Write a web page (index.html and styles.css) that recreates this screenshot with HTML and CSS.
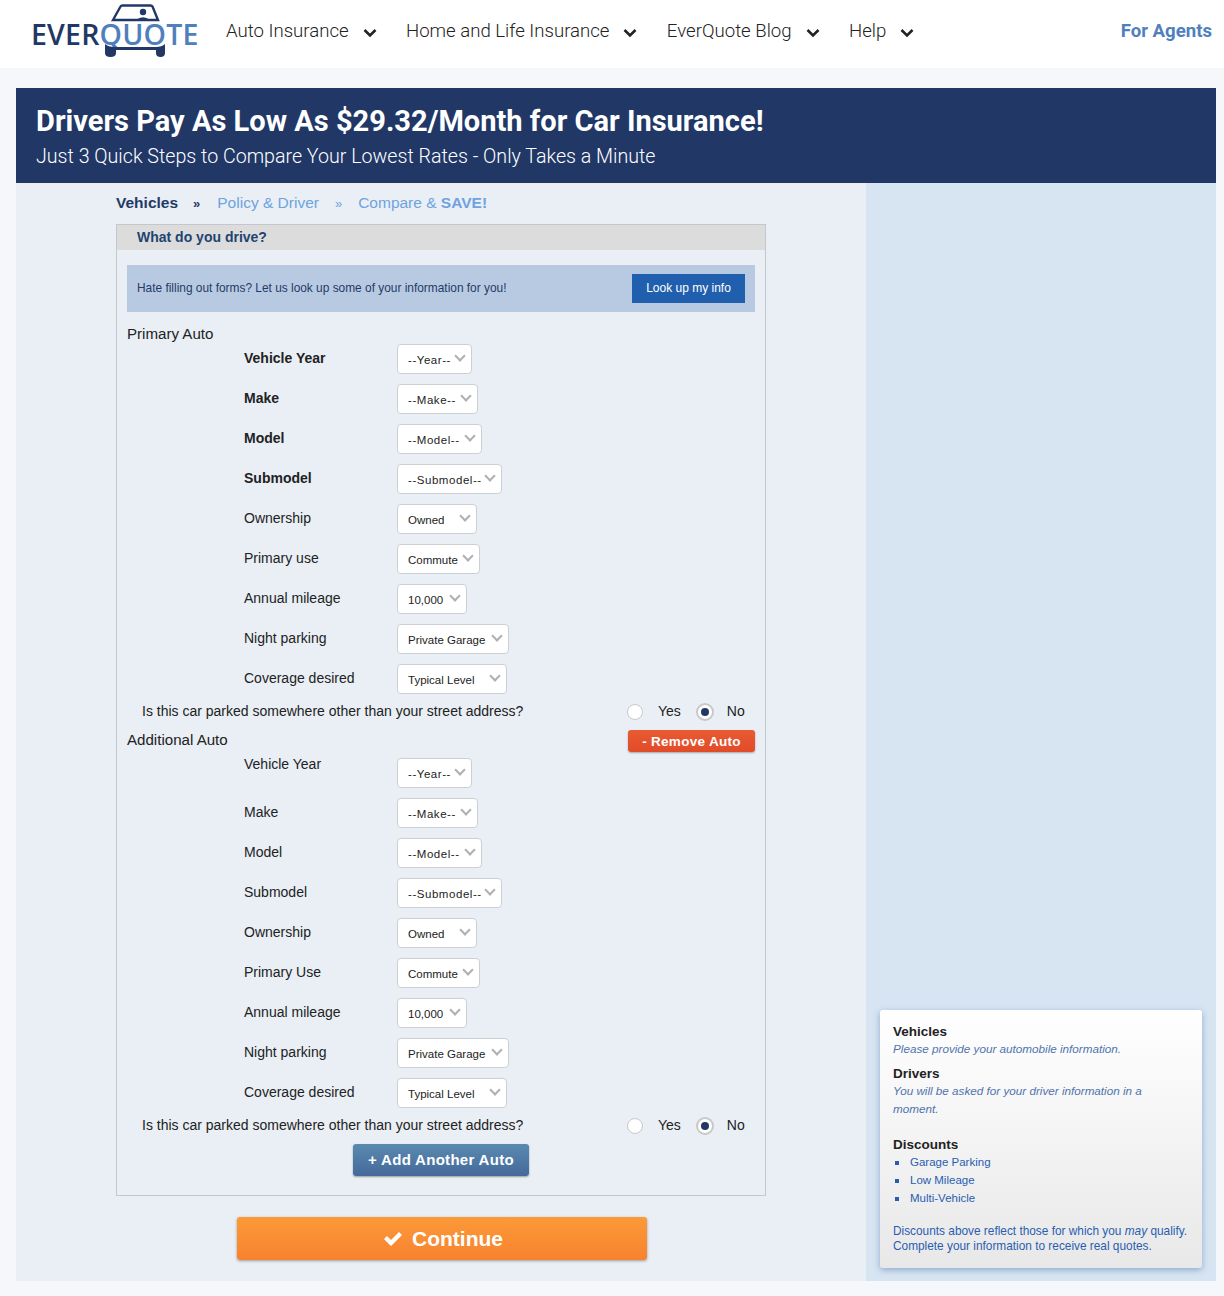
FILE: index.html

```html
<!DOCTYPE html>
<html lang="en">
<head>
  <meta charset="UTF-8">
  <meta name="viewport" content="width=device-width, initial-scale=1.0">
  <title>EverQuote - Vehicles</title>
  <link rel="stylesheet" href="styles.css">
</head>
<body>
<header class="topbar">
  <a class="logo">
    <svg class="logo-car" width="70" height="58" viewBox="0 0 70 58">
      <path d="M15 20 L22.500 6.500 Q23 5.500 24.500 5.500 H52.500 Q54 5.500 54.500 6.500 L60 20 Z" fill="none" stroke="#213867" stroke-width="2.400"/>
      <circle cx="45" cy="12" r="3.200" fill="#213867"/>
      <path d="M38 20 Q45 14.500 52 20 Z" fill="#213867"/>
      <path d="M7 44 Q10 47 17 47 H58 Q64 47 67 44 V53 Q67 57 62.500 57 Q58 57 58 53 V50 H18 V53 Q18 57 12.500 57 Q7 57 7 53 Z" fill="#213867"/>
    </svg>
    <span class="logo-dark">EVER</span><span class="logo-light">QUOTE</span>
  </a>
  <nav class="nav">
    <a class="nav-item">Auto Insurance <svg class="nav-chev" width="14" height="10" viewBox="0 0 14 10"><path d="M1.500 2 L7 7.500 L12.500 2" fill="none" stroke="#222" stroke-width="2.600"/></svg></a>
    <a class="nav-item">Home and Life Insurance <svg class="nav-chev" width="14" height="10" viewBox="0 0 14 10"><path d="M1.500 2 L7 7.500 L12.500 2" fill="none" stroke="#222" stroke-width="2.600"/></svg></a>
    <a class="nav-item">EverQuote Blog <svg class="nav-chev" width="14" height="10" viewBox="0 0 14 10"><path d="M1.500 2 L7 7.500 L12.500 2" fill="none" stroke="#222" stroke-width="2.600"/></svg></a>
    <a class="nav-item">Help <svg class="nav-chev" width="14" height="10" viewBox="0 0 14 10"><path d="M1.500 2 L7 7.500 L12.500 2" fill="none" stroke="#222" stroke-width="2.600"/></svg></a>
  </nav>
  <a class="agents">For Agents</a>
</header>

<div class="wrapper">
  <div class="banner">
    <h1>Drivers Pay As Low As $29.32/Month for Car Insurance!</h1>
    <p>Just 3 Quick Steps to Compare Your Lowest Rates - Only Takes a Minute</p>
  </div>

  <div class="content">
    <main class="main-col">
      <div class="steps">
        <span class="step-on">Vehicles</span>
        <span class="sep-on">»</span>
        <span>Policy &amp; Driver</span>
        <span class="sep">»</span>
        <span>Compare &amp; <b>SAVE!</b></span>
      </div>

      <section class="form-box">
        <h2 class="form-title">What do you drive?</h2>
        <div class="form-body">
          <div class="lookup">
            <span>Hate filling out forms? Let us look up some of your information for you!</span>
            <button class="lookup-btn">Look up my info</button>
          </div>

          <div class="group-title">Primary Auto</div>
          <div class="row"><label class="req">Vehicle Year</label><div class="sel empty w-year">--Year--</div></div>
          <div class="row"><label class="req">Make</label><div class="sel empty w-make">--Make--</div></div>
          <div class="row"><label class="req">Model</label><div class="sel empty w-model">--Model--</div></div>
          <div class="row"><label class="req">Submodel</label><div class="sel empty w-submodel">--Submodel--</div></div>
          <div class="row"><label>Ownership</label><div class="sel w-owned">Owned</div></div>
          <div class="row"><label>Primary use</label><div class="sel w-use">Commute</div></div>
          <div class="row"><label>Annual mileage</label><div class="sel w-miles">10,000</div></div>
          <div class="row"><label>Night parking</label><div class="sel w-night">Private Garage</div></div>
          <div class="row"><label>Coverage desired</label><div class="sel w-cover">Typical Level</div></div>
          <div class="parked">
            <span class="parked-q">Is this car parked somewhere other than your street address?</span>
            <span class="radio"></span><span class="radio-label">Yes</span>
            <span class="radio on"></span><span class="radio-label">No</span>
          </div>

          <div class="group-head">
            <div class="group-title">Additional Auto</div>
            <button class="remove-btn">- Remove Auto</button>
          </div>
          <div class="row row-first"><label>Vehicle Year</label><div class="sel empty w-year">--Year--</div></div>
          <div class="row"><label>Make</label><div class="sel empty w-make">--Make--</div></div>
          <div class="row"><label>Model</label><div class="sel empty w-model">--Model--</div></div>
          <div class="row"><label>Submodel</label><div class="sel empty w-submodel">--Submodel--</div></div>
          <div class="row"><label>Ownership</label><div class="sel w-owned">Owned</div></div>
          <div class="row"><label>Primary Use</label><div class="sel w-use">Commute</div></div>
          <div class="row"><label>Annual mileage</label><div class="sel w-miles">10,000</div></div>
          <div class="row"><label>Night parking</label><div class="sel w-night">Private Garage</div></div>
          <div class="row"><label>Coverage desired</label><div class="sel w-cover">Typical Level</div></div>
          <div class="parked">
            <span class="parked-q">Is this car parked somewhere other than your street address?</span>
            <span class="radio"></span><span class="radio-label">Yes</span>
            <span class="radio on"></span><span class="radio-label">No</span>
          </div>

          <div class="add-wrap"><button class="add-btn">+ Add Another Auto</button></div>
        </div>
      </section>

      <div class="continue-wrap">
        <button class="continue-btn">
          <svg width="18" height="15" viewBox="0 0 18 15"><path d="M0 8 L3 5 L7 9 L15 1 L18 4 L7 15 Z" fill="#fff"/></svg>
          Continue
        </button>
      </div>
    </main>

    <aside class="side-col">
      <div class="side-card">
        <h3>Vehicles</h3>
        <p class="side-note">Please provide your automobile information.</p>
        <h3 class="side-gap">Drivers</h3>
        <p class="side-note">You will be asked for your driver information in a moment.</p>
        <h3 class="side-gap-lg">Discounts</h3>
        <ul class="side-list">
          <li>Garage Parking</li>
          <li>Low Mileage</li>
          <li>Multi-Vehicle</li>
        </ul>
        <div class="side-foot">
          <p>Discounts above reflect those for which you <i>may</i> qualify.</p>
          <p>Complete your information to receive real quotes.</p>
        </div>
      </div>
    </aside>
  </div>
</div>
</body>
</html>
```

FILE: styles.css

```css
body {
  margin: 0;
  background-color: #f5f7fb;
  font-family: "Liberation Sans", Arial, sans-serif;
  color: #222;
  height: 1296px;
}

/* top bar */
.topbar {
  height: 68px;
  background-color: white;
  display: flex;
  align-items: center;
  position: relative;
}

.logo {
  position: relative;
  margin-left: 31px;
  width: 169px;
  height: 68px;
  display: flex;
  align-items: center;
  font-family: "Open Sans", sans-serif;
  font-weight: 600;
  font-size: 28.500px;
  letter-spacing: 0.2px;
  box-sizing: border-box;
}

.logo-car {
  position: absolute;
  left: 67px;
  top: 0;
}

.logo-dark {
  color: #213867;
}

.logo-light {
  color: #4f80bd;
}

.nav {
  display: flex;
  margin-left: 26px;
  padding-bottom: 6px;
  gap: 29.400px;
}

.nav-item {
  font-family: Roboto, sans-serif;
  font-weight: 300;
  font-size: 18.600px;
  color: #222;
  display: flex;
  align-items: center;
  gap: 14px;
}

.nav-chev {
  margin-top: 3px;
}

.agents {
  margin-left: auto;
  margin-right: 12px;
  padding-bottom: 6px;
  font-family: Roboto, sans-serif;
  font-weight: 700;
  font-size: 18.600px;
  color: #4f80bd;
}

/* page */
.wrapper {
  margin: 20px 8px 0 16px;
}

.banner {
  height: 95px;
  box-sizing: border-box;
  padding: 14px 20px 0;
  background-color: #213867;
  color: white;
  font-family: Roboto, sans-serif;
}

.banner h1 {
  margin: 0;
  font-size: 29.060px;
  font-weight: 700;
  line-height: 38px;
}

.banner p {
  margin: 2px 0 0;
  font-size: 19.640px;
  font-weight: 300;
  line-height: 29px;
}

.content {
  display: flex;
  height: 1098px;
}

.main-col {
  width: 850px;
  box-sizing: border-box;
  background-color: #e9eff5;
  padding: 0 100px;
}

.side-col {
  width: 350px;
  box-sizing: border-box;
  background-color: #d7e5f3;
  padding: 0 14px 13px;
  display: flex;
  flex-direction: column;
  justify-content: flex-end;
}

/* steps */
.steps {
  height: 40px;
  margin-bottom: 1px;
  display: flex;
  align-items: center;
  font-size: 15.500px;
  color: #6fa3e0;
}

.steps b {
  font-weight: 700;
}

.step-on {
  color: #1f3a66;
  font-weight: 700;
}

.sep-on {
  color: #1f3a66;
  font-weight: 700;
  font-size: 13px;
  margin: 0 17px 0 15px;
}

.sep {
  font-size: 13px;
  margin: 0 16px;
}

/* form */
.form-box {
  width: 650px;
  height: 972px;
  box-sizing: border-box;
  border: 1px solid #c4c8cc;
}

.form-title {
  margin: 0;
  height: 25px;
  line-height: 25px;
  padding-left: 20px;
  background-color: #dcdcdc;
  color: #1f4471;
  font-size: 14px;
  font-weight: 700;
}

.form-body {
  padding: 15px 10px 0;
}

.lookup {
  height: 47px;
  background-color: #b8cae2;
  display: flex;
  align-items: center;
  justify-content: space-between;
  padding: 0 10px;
  font-size: 11.900px;
  color: #1f3a66;
}

.lookup span {
  margin-top: -2px;
}

.lookup-btn {
  width: 113px;
  height: 29px;
  border: none;
  background-color: #1f5fae;
  color: white;
  font-family: inherit;
  font-size: 12px;
  padding: 0 0 2px;
}

.group-title {
  font-size: 15.100px;
  line-height: 20px;
}

.form-body > .group-title {
  margin: 12px 0 -5px;
}

.row {
  height: 40px;
  display: flex;
  align-items: center;
  padding-left: 117px;
  font-size: 14px;
}

.row label {
  width: 153px;
  margin-top: -3px;
}

.row label.req {
  font-weight: 700;
}

.row-first {
  margin-top: 1px;
}

.row-first label {
  align-self: flex-start;
  margin-top: 3px;
}

.sel {
  position: relative;
  height: 30px;
  line-height: 31px;
  box-sizing: border-box;
  background-color: white;
  border: 1px solid #ccd0d4;
  border-radius: 4px;
  padding-left: 10px;
  font-size: 11.500px;
  color: #222;
}

.sel.empty {
  letter-spacing: 0.55px;
}

.sel::after {
  content: "";
  position: absolute;
  right: 7px;
  top: 7px;
  width: 6px;
  height: 6px;
  border-right: 2px solid #b0b0b0;
  border-bottom: 2px solid #b0b0b0;
  transform: rotate(45deg);
}

.w-year { width: 75px; }
.w-make { width: 81px; }
.w-model { width: 85px; }
.w-submodel { width: 105px; }
.w-owned { width: 80px; }
.w-use { width: 83px; }
.w-miles { width: 70px; }
.w-night { width: 112px; }
.w-cover { width: 110px; }

.parked {
  height: 22px;
  margin-top: 1px;
  padding-left: 15px;
  display: flex;
  align-items: center;
  font-size: 14px;
}

.parked-q {
  width: 485px;
}

.radio {
  width: 16px;
  height: 16px;
  margin-top: 2px;
  box-sizing: border-box;
  border: 1.500px solid #c8c8c8;
  border-radius: 50%;
  background-color: white;
  position: relative;
}

.radio.on {
  width: 18px;
  height: 18px;
  border-width: 2px;
  margin-left: 15px;
}

.radio.on::after {
  content: "";
  position: absolute;
  left: 3px;
  top: 3px;
  width: 8px;
  height: 8px;
  border-radius: 50%;
  background-color: #213867;
}

.radio-label {
  margin-left: 15px;
}

.radio.on + .radio-label {
  margin-left: 13px;
}

.group-head {
  display: flex;
  justify-content: space-between;
  align-items: center;
  height: 22px;
  margin-top: 8px;
}

.group-head .group-title {
  margin-top: -2px;
}

.remove-btn {
  width: 127px;
  height: 22px;
  padding: 0;
  border: none;
  border-radius: 3px;
  background: linear-gradient(#e95a33, #e04c28);
  box-shadow: 0 1px 2px rgba(0, 0, 0, 0.3);
  color: white;
  font-family: inherit;
  font-size: 13.500px;
  font-weight: 700;
  letter-spacing: 0.3px;
}

.add-wrap {
  text-align: center;
  margin-top: 8px;
}

.add-btn {
  width: 176px;
  height: 32px;
  padding: 0 0 2px;
  border: none;
  border-radius: 3px;
  background: linear-gradient(#5a8ab0, #44699a);
  box-shadow: 0 1px 2px rgba(0, 0, 0, 0.35);
  color: white;
  font-family: inherit;
  font-size: 15px;
  font-weight: 700;
  letter-spacing: 0.3px;
}

.continue-wrap {
  width: 652px;
  margin-top: 21px;
  text-align: center;
}

.continue-btn {
  width: 410px;
  height: 43px;
  padding: 0 0 0 3px;
  border: none;
  border-radius: 3px;
  background: linear-gradient(#fb9a38, #f8822f);
  box-shadow: 0 1px 3px rgba(0, 0, 0, 0.35);
  color: white;
  font-family: inherit;
  font-size: 21px;
  font-weight: 700;
  display: inline-flex;
  align-items: center;
  justify-content: center;
  gap: 10px;
}

/* sidebar */
.side-card {
  height: 258px;
  box-sizing: border-box;
  padding: 14px 10px 0 13px;
  border-radius: 3px;
  background: linear-gradient(#ffffff, #e8e8e8);
  box-shadow: 0 2px 6px rgba(70, 110, 170, 0.5);
  font-size: 11.700px;
  color: #2a5db0;
}

.side-card h3 {
  margin: 0;
  font-size: 13.500px;
  line-height: 16px;
  color: #222;
}

.side-card .side-gap {
  margin-top: 8px;
}

.side-card .side-gap-lg {
  margin-top: 19px;
}

.side-note {
  margin: 0;
  max-width: 270px;
  line-height: 18px;
  font-style: italic;
  color: #4f74ad;
}

.side-list {
  margin: 0;
  padding: 0 0 0 17px;
  list-style: none;
  font-size: 11.500px;
}

.side-list li {
  line-height: 18px;
  position: relative;
}

.side-list li::before {
  content: "";
  position: absolute;
  left: -15px;
  top: 8px;
  width: 4px;
  height: 4px;
  background-color: #2a5db0;
}

.side-foot {
  margin-top: 17px;
  font-size: 11.850px;
  white-space: nowrap;
}

.side-foot p {
  margin: 0;
  line-height: 15px;
}
```
